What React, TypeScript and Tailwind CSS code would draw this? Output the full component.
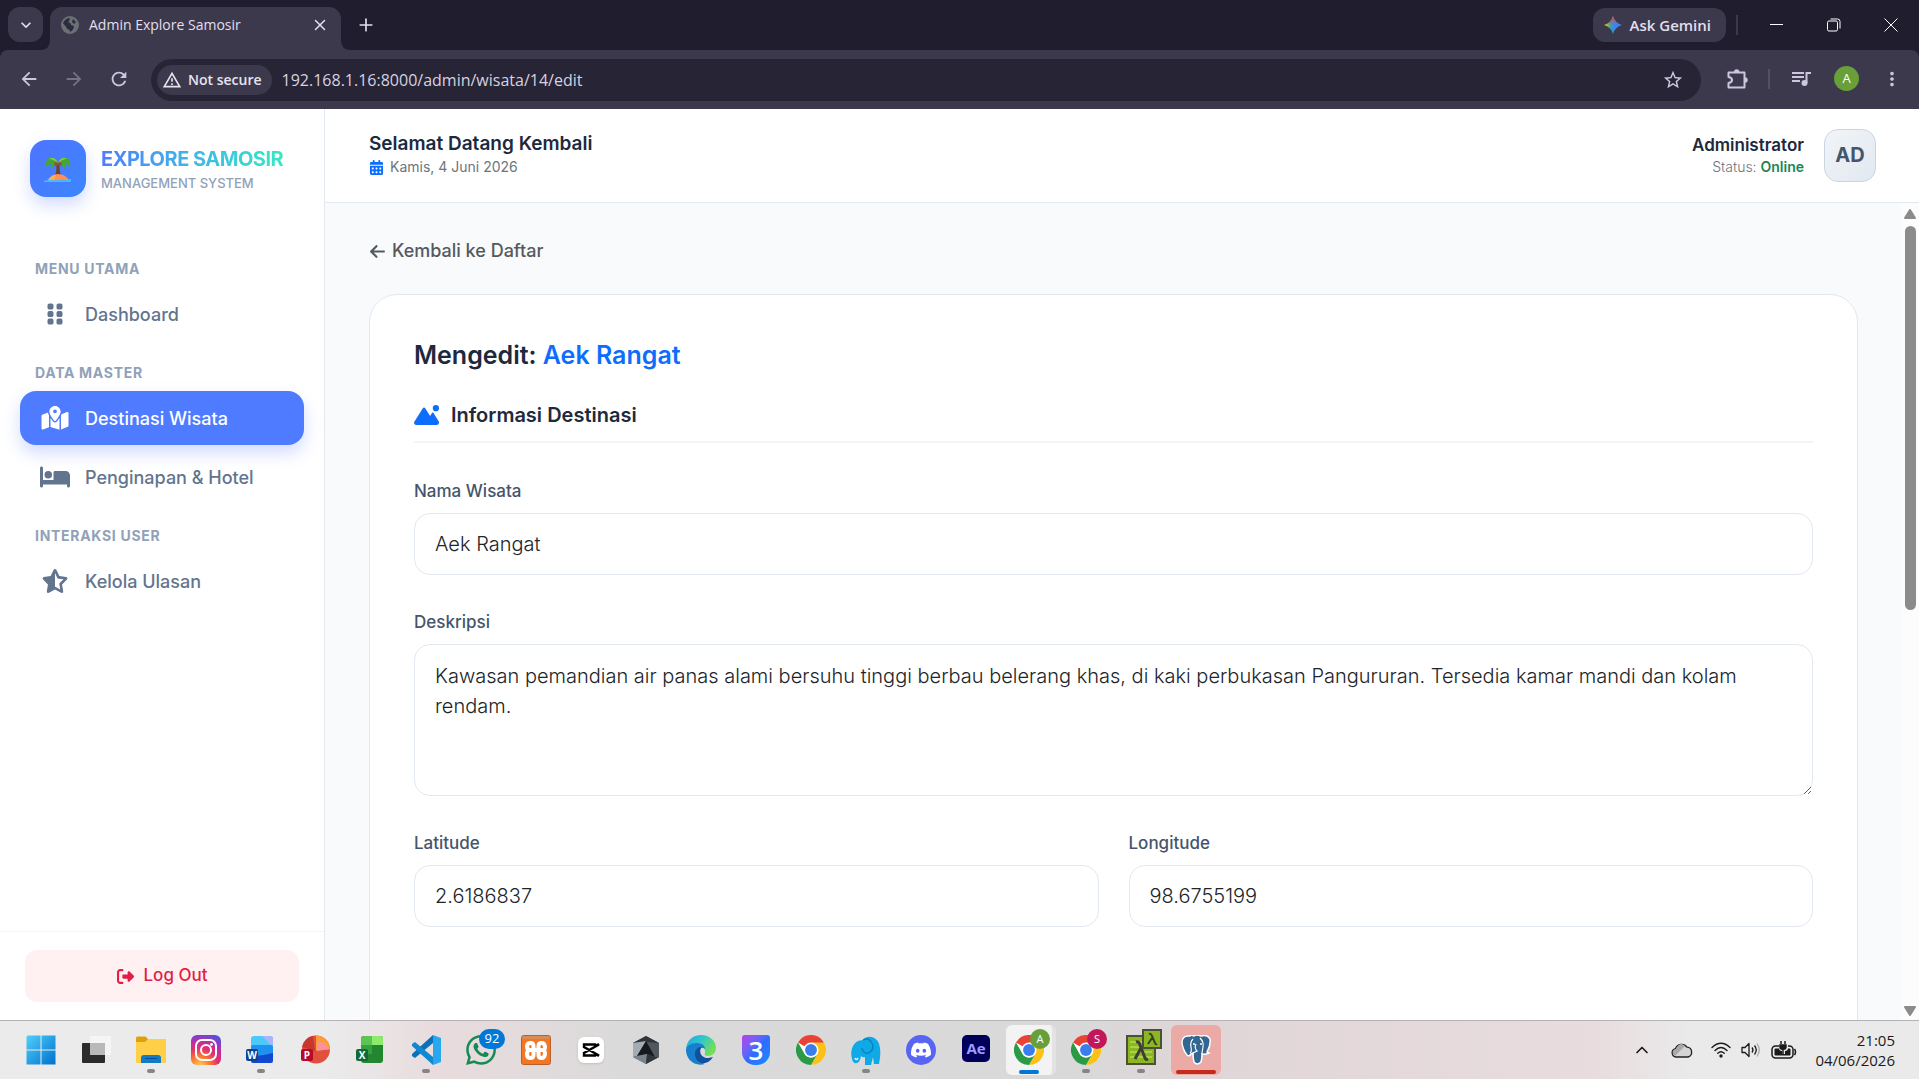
import React from 'react';
import { FaGripVertical, FaMapLocationDot, FaBed, FaStarHalfStroke, FaRightFromBracket, FaCalendarDays, FaArrowLeft, FaMountainSun } from 'react-icons/fa6';
import { MdArrowBack, MdArrowForward, MdRefresh, MdStarBorder, MdMoreVert, MdExpandMore, MdOutlineWarningAmber } from 'react-icons/md';
import { LuX, LuPlus, LuChevronUp } from 'react-icons/lu';
import { SiDiscord, SiWhatsapp } from 'react-icons/si';

function TabStrip() {
  return (
    <div className="flex h-[50px] shrink-0 items-end bg-[#201d2e] text-[#e2dfee]">
      <button aria-label="Search tabs" className="mb-2 ml-2 flex h-[35px] w-[35px] items-center justify-center rounded-xl bg-[#3d394c]">
        <MdExpandMore className="text-xl" />
      </button>
      <div className="relative ml-[7px] flex h-[43px] w-[291px] items-center rounded-t-xl bg-[#3d394c] pr-3 pb-2 pl-[11px]">
        <svg viewBox="0 0 10 10" className="absolute bottom-0 -left-[10px] h-[10px] w-[10px]"><path d="M10 0v10H0Q10 10 10 0z" fill="#3d394c" /></svg>
        <svg viewBox="0 0 10 10" className="absolute -right-[10px] bottom-0 h-[10px] w-[10px]"><path d="M0 0v10h10Q0 10 0 0z" fill="#3d394c" /></svg>
        <svg viewBox="0 0 18 18" className="h-[18px] w-[18px] shrink-0">
          <circle cx="9" cy="9" r="9" fill="#6b7075" />
          <path d="M2 7c2-4 5-5 7-5-1 2 0 3-2 4 2 1 3 1 3 3l3 1c0 3-2 5-4 6 0-2-1-3-3-3 0-2-2-3-4-6zM12 3l3 3-2 2-2-2z" fill="#2e2b3c" />
        </svg>
        <span className="ml-[10px] flex-1 text-[14px] whitespace-nowrap">Admin Explore Samosir</span>
        <button aria-label="Close tab"><LuX className="text-lg" /></button>
      </div>
      <button aria-label="New tab" className="mb-[15px] ml-[15px]"><LuPlus className="text-xl" /></button>
      <div className="flex-1" />
      <button className="mb-2 flex h-[34px] items-center gap-2 rounded-xl bg-[#3d394c] pr-[15px] pl-[11px] text-[15px] font-semibold">
        <svg viewBox="0 0 18 18" className="h-[18px] w-[18px]">
          <defs>
            <linearGradient id="gem" x1="0" y1="0" x2="1" y2="0">
              <stop offset="0.1" stopColor="#fbbc04" /><stop offset="0.35" stopColor="#34a3a8" /><stop offset="0.6" stopColor="#3b82f6" />
            </linearGradient>
            <linearGradient id="gemTop" x1="0" y1="0" x2="0" y2="1">
              <stop offset="0" stopColor="#ea4335" /><stop offset="0.5" stopColor="#ea4335" stopOpacity="0" />
            </linearGradient>
          </defs>
          <path d="M9 0q2 7 9 9-7 2-9 9-2-7-9-9 7-2 9-9z" fill="url(#gem)" />
          <path d="M9 0q2 7 9 9-7 2-9 9-2-7-9-9 7-2 9-9z" fill="url(#gemTop)" />
        </svg>
        Ask Gemini
      </button>
      <div className="mb-[15px] ml-[10px] h-5 w-[2px] bg-[#3d394c]" />
      <div className="mb-[18px] ml-[32px] flex items-center gap-[43px] pr-[21px]">
        <button aria-label="Minimize"><svg viewBox="0 0 14 14" className="h-[14px] w-[14px]"><path d="M0 6.500h13" stroke="#fff" /></svg></button>
        <button aria-label="Restore"><svg viewBox="0 0 14 14" className="h-[14px] w-[14px]"><rect x="0.500" y="3" width="10" height="10" rx="1.500" stroke="#fff" fill="none" /><path d="M3.500 1h7q2.500 0 2.500 2.500v7" stroke="#fff" fill="none" /></svg></button>
        <button aria-label="Close"><svg viewBox="0 0 14 14" className="h-[14px] w-[14px]"><path d="M0.500 0.500l13 13M13.500 0.500l-13 13" stroke="#fff" /></svg></button>
      </div>
    </div>
  );
}

function Toolbar() {
  return (
    <div className="shrink-0 bg-[#201d2e]">
      <div className="flex h-[59px] items-center rounded-t-lg bg-[#3d394c] text-[#cdc6dd]">
        <div className="flex w-[151px] items-center gap-[23px] pb-[2px] pl-[18px] text-[22px]">
          <button aria-label="Back"><MdArrowBack /></button>
          <button aria-label="Forward" className="text-[#767185]"><MdArrowForward /></button>
          <button aria-label="Reload"><MdRefresh /></button>
        </div>
        <div className="flex h-[42px] flex-1 items-center rounded-full bg-[#272436] pr-[17px] pl-[6px]">
          <button className="flex h-[30px] items-center gap-[6px] rounded-full bg-[#3d394c] pr-[10px] pl-[5px] text-[14px] font-semibold whitespace-nowrap text-[#e6e3ee]">
            <MdOutlineWarningAmber className="text-xl" />Not secure
          </button>
          <input aria-label="Address" className="ml-[10px] flex-1 bg-transparent text-[16px] text-[#d6d2e0] outline-none" defaultValue="192.168.1.16:8000/admin/wisata/14/edit" />
          <button aria-label="Bookmark"><MdStarBorder className="text-[22px]" /></button>
        </div>
        <div className="flex items-center pr-4 pb-[2px] pl-[25px] text-[22px]">
          <button aria-label="Extensions"><svg viewBox="0 0 22 22" className="h-[22px] w-[22px]"><path d="M2.500 4.500h16v15h-16V15q3.500-.5 3.500-3t-3.500-3z" fill="none" stroke="currentColor" strokeWidth="2" strokeLinejoin="round" /><path d="M8 4a2.700 2.700 0 0 1 5.400 0zM19 9.300a2.700 2.700 0 0 1 0 5.400z" fill="currentColor" /></svg></button>
          <div className="mx-[20px] h-5 w-[2px] bg-[#555064]" />
          <button aria-label="Media"><svg viewBox="0 0 22 22" className="h-[22px] w-[22px]"><path d="M2 5h12M2 9h12M2 13h8" stroke="currentColor" strokeWidth="2" /><circle cx="14.500" cy="15" r="3" fill="currentColor" /><path d="M16.500 15V5H21" stroke="currentColor" strokeWidth="2" fill="none" /></svg></button>
          <button className="ml-[22px] flex h-[25px] w-[25px] items-center justify-center rounded-full bg-[#689f38] text-[13px] text-white">A</button>
          <button aria-label="Menu" className="ml-[22px]"><MdMoreVert /></button>
        </div>
      </div>
    </div>
  );
}

function Palm() {
  return (
    <svg viewBox="0 0 28 28" className="h-7 w-7">
      <path d="M12 9h4c-1 5 0 8 1 12h-6c1-4 2-7 1-12z" fill="#6d4335" />
      <path d="M14 8C11 1 5 1 3 5c-2 2-2 5 0 7 1-2 2-3 4-3-1 2 0 4 1 5 1-3 3-5 6-6 3 1 5 3 6 6 1-1 2-3 1-5 2 0 3 1 4 3 2-2 2-5 0-7-2-4-8-4-11 3z" fill="#45a636" />
      <path d="M14 8C12 3 8 2 5 4c4 0 6 2 9 4 3-2 5-4 9-4-3-2-7-1-9 4z" fill="#86cf45" />
      <circle cx="12" cy="9" r="2" fill="#8e5443" /><circle cx="16" cy="9" r="2" fill="#8e5443" />
      <path d="M4 25q3-6 10-6t11 6z" fill="#ff8f55" />
      <path d="M4 25q4-5 8-5l-2 5z" fill="#ffb04c" />
      <path d="M0 26q6-2 14-1t13-1q1 2-1 3H0z" fill="#4fb9f7" />
    </svg>
  );
}

const groups = [
  { title: 'MENU UTAMA', items: [{ label: 'Dashboard', Icon: FaGripVertical }] },
  { title: 'DATA MASTER', items: [{ label: 'Destinasi Wisata', Icon: FaMapLocationDot, active: true }, { label: 'Penginapan & Hotel', Icon: FaBed }] },
  { title: 'INTERAKSI USER', items: [{ label: 'Kelola Ulasan', Icon: FaStarHalfStroke }] },
] as { title: string; items: { label: string; Icon: React.ComponentType<{ className?: string }>; active?: boolean }[] }[];

function Sidebar() {
  return (
    <aside className="flex w-[325px] shrink-0 flex-col border-r border-slate-200 bg-white">
      <div className="flex items-center gap-[15px] px-[30px] pt-[31px]">
        <div className="flex h-[57px] w-14 shrink-0 items-center justify-center rounded-2xl bg-linear-to-br from-[#4e73ff] to-[#3a86ff] shadow-[0_8px_16px_rgba(78,115,255,0.25)]"><Palm /></div>
        <div className="pt-1 whitespace-nowrap">
          <div className="bg-linear-to-r from-[#4e7bff] to-[#37e8c4] bg-clip-text text-[20px] leading-6 font-bold tracking-tight text-transparent">EXPLORE SAMOSIR</div>
          <div className="text-[13px] leading-6 font-medium text-slate-400">MANAGEMENT SYSTEM</div>
        </div>
      </div>
      <nav className="mt-[52px] flex flex-1 flex-col px-5">
        {groups.map((g) => (
          <section key={g.title} className="mb-[7px]">
            <h2 className="mt-2 mb-[6px] pl-[15px] text-[14px] leading-6 font-bold tracking-wider text-slate-400">{g.title}</h2>
            {g.items.map(({ label, Icon, active }) => (
              <a key={label} href="#" className={active ? 'mb-[5px] flex h-[54px] items-center gap-[15px] rounded-2xl bg-[#4e7bff] pl-5 text-[18px] font-medium text-white shadow-[0_8px_16px_rgba(78,115,255,0.25)]' : 'mb-[5px] flex h-[54px] items-center gap-[15px] rounded-2xl pl-5 text-[18px] font-medium text-slate-500'}>
                <Icon className="h-6 w-[30px]" />
                {label}
              </a>
            ))}
          </section>
        ))}
      </nav>
      <div className="border-t border-slate-100 px-[25px] pt-[18px] pb-[18px]">
        <button className="flex h-[52px] w-full items-center justify-center gap-[10px] rounded-xl bg-[#fff0f1] text-[17px] font-medium text-[#e11d48]">
          <FaRightFromBracket />Log Out
        </button>
      </div>
    </aside>
  );
}

function Header() {
  return (
    <header className="flex h-[94px] shrink-0 items-center justify-between border-b border-slate-200 bg-white pr-[43px] pb-[1px] pl-11">
      <div>
        <div className="text-[19px] leading-6 font-semibold text-slate-800">Selamat Datang Kembali</div>
        <div className="flex items-center gap-[6px] text-[14px] leading-[22px] text-[#6c757d]"><FaCalendarDays className="text-[15px] text-[#0d6efd]" />Kamis, 4 Juni 2026</div>
      </div>
      <div className="flex items-center gap-5">
        <div className="text-right">
          <div className="text-[17px] leading-6 font-semibold text-slate-800">Administrator</div>
          <div className="text-[14px] leading-5 font-light text-[#6c757d]">Status: <span className="font-semibold text-[#198754]">Online</span></div>
        </div>
        <div className="flex h-[53px] w-[52px] items-center justify-center rounded-[14px] border border-slate-300 bg-linear-to-br from-slate-100 to-slate-200 text-xl font-bold text-slate-600">AD</div>
      </div>
    </header>
  );
}

const labelClass = 'mb-[10px] block text-[17px] leading-6 font-medium text-slate-600';
const fieldClass = 'block w-full rounded-2xl border border-slate-200 bg-white px-5 text-[20px] leading-[30px] font-light text-[#212529] outline-none';

function Field({ id, label, value }: { id: string; label: string; value: string }) {
  return (
    <div>
      <label htmlFor={id} className={labelClass}>{label}</label>
      <input id={id} defaultValue={value} className={fieldClass + ' h-[62px]'} />
    </div>
  );
}

function Content() {
  return (
    <div className="flex min-h-0 flex-1">
      <main className="min-w-0 flex-1 overflow-hidden bg-slate-50 pt-9 pr-[43px] pl-11">
        <a href="#" className="flex items-center gap-[6px] text-[18px] leading-6 font-medium text-[#55595e]"><FaArrowLeft className="text-[17px]" />Kembali ke Daftar</a>
        <form className="mt-[31px] h-[900px] rounded-[28px] border border-slate-200 bg-white p-11">
          <h1 className="text-[25px] leading-8 font-semibold text-slate-800">Mengedit: <span className="text-[#0d6efd]">Aek Rangat</span></h1>
          <h2 className="mt-[30px] mb-9 flex items-center gap-3 border-b-2 border-slate-100 pb-3 text-xl leading-7 font-semibold text-slate-800">
            <FaMountainSun className="h-5 w-[25px] text-[#0d6efd]" />Informasi Destinasi
          </h2>
          <Field id="nama" label="Nama Wisata" value="Aek Rangat" />
          <div className="mt-[35px]">
            <label htmlFor="desk" className={labelClass}>Deskripsi</label>
            <textarea id="desk" className={fieldClass + ' h-[152px] resize-y py-4'} defaultValue="Kawasan pemandian air panas alami bersuhu tinggi berbau belerang khas, di kaki perbukasan Pangururan. Tersedia kamar mandi dan kolam rendam." />
          </div>
          <div className="mt-[35px] grid grid-cols-2 gap-[30px]">
            <Field id="lat" label="Latitude" value="2.6186837" />
            <Field id="lng" label="Longitude" value="98.6755199" />
          </div>
        </form>
      </main>
      <div aria-hidden="true" className="flex w-[18px] shrink-0 flex-col items-center bg-[#fcfcfc] pt-[6px] pb-1">
        <svg viewBox="0 0 12 10" className="h-[10px] w-3"><path d="M6 1l5 8H1z" fill="#8b8b8b" stroke="#8b8b8b" strokeLinejoin="round" strokeWidth="2" /></svg>
        <div className="mt-[7px] h-[384px] w-[11px] rounded-full bg-[#8b8b8b]" />
        <div className="flex-1" />
        <svg viewBox="0 0 12 10" className="h-[10px] w-3"><path d="M6 9l5-8H1z" fill="#8b8b8b" stroke="#8b8b8b" strokeLinejoin="round" strokeWidth="2" /></svg>
      </div>
    </div>
  );
}

const svg = 'h-[30px] w-[30px]';

function Chrome() {
  return (
    <svg viewBox="0 0 48 48" className={svg}>
      <circle cx="24" cy="24" r="24" fill="#fff" />
      <path d="M24 24L3.200 12A24 24 0 0 1 44.800 12z" fill="#ea4335" />
      <path d="M24 12h20.800A24 24 0 0 1 24 48l10.400-18z" fill="#fbc116" />
      <path d="M3.200 12A24 24 0 0 0 24 48l10.400-18A12 12 0 0 1 13.600 30z" fill="#2b9a47" />
      <circle cx="24" cy="24" r="12" fill="#fff" /><circle cx="24" cy="24" r="9.500" fill="#3b7ded" />
    </svg>
  );
}

function OfficeTile({ letter, color }: { letter: string; color: string }) {
  return <span className="absolute bottom-[4px] left-0 flex h-3 w-3 items-center justify-center rounded-[2px] text-[10px] leading-none font-bold text-white" style={{ backgroundColor: color }}>{letter}</span>;
}

type TaskbarApp = { name: string; icon: React.ReactNode; mark?: string };

const apps: TaskbarApp[] = [
  { name: 'Start', icon: <svg viewBox="0 0 30 30" className={svg}><defs><linearGradient id="win" x1="0" y1="0" x2="1" y2="1"><stop stopColor="#4fd0fb" /><stop offset="1" stopColor="#0070cc" /></linearGradient></defs><path d="M1.500 0.500h13v14h-14v-13zM15.500 0.500h14v14h-14zM0.500 15.500h14v14h-14zM15.500 15.500h14v14h-14z" fill="url(#win)" /></svg> },
  { name: 'Task view', icon: <svg viewBox="0 0 30 30" className={svg}><rect x="1" y="8" width="23" height="20" rx="1" fill="#2b2b2b" /><rect x="9" y="1" width="21" height="19" rx="1" fill="#f5f5f5" /><path d="M9 8h15v12H9z" fill="#b9b9b9" /></svg> },
  { name: 'File Explorer', mark: 'gray', icon: <svg viewBox="0 0 30 30" className={svg}><path d="M0 3q0-1.500 1.500-1.500h8l3 3H30V12H0z" fill="#dfa008" /><path d="M0 7h9l3-3h17q1 0 1 1v22q0 1-1 1H1q-1 0-1-1z" fill="#ffcf48" /><path d="M5 28v-5q0-3 3-3h14q3 0 3 3v5z" fill="#127bc9" /><path d="M9 23.500h12" stroke="#0a4d8f" /></svg> },
  { name: 'Instagram', icon: <svg viewBox="0 0 30 30" className={svg}><defs><radialGradient id="ig" cx="0.3" cy="1.05" r="1.1"><stop stopColor="#ffd35c" /><stop offset="0.3" stopColor="#fb7b2f" /><stop offset="0.55" stopColor="#e52f6b" /><stop offset="0.8" stopColor="#b32fb0" /><stop offset="1" stopColor="#5a4fd8" /></radialGradient></defs><rect width="30" height="30" rx="6" fill="url(#ig)" /><rect x="5" y="5" width="20" height="20" rx="6" fill="none" stroke="#fff" strokeWidth="2" /><circle cx="15" cy="15" r="5" fill="none" stroke="#fff" strokeWidth="2" /><circle cx="20.500" cy="9.500" r="1.400" fill="#fff" /></svg> },
  { name: 'Word', mark: 'gray', icon: <><svg viewBox="0 0 30 30" className={svg}><rect x="5" y="1" width="22" height="14" rx="3" fill="#4cc8fb" /><path d="M16 1h8q3 0 3 3v8z" fill="#a9b5f8" /><rect x="5" y="10" width="22" height="11" rx="2" fill="#1d92f0" /><path d="M5 21q12 0 22-3v8q0 2-2 2H7q-2 0-2-2z" fill="#1048d0" /></svg><OfficeTile letter="W" color="#103f91" /></> },
  { name: 'PowerPoint', icon: <><svg viewBox="0 0 30 30" className={svg}><circle cx="15" cy="14.500" r="14" fill="#e2503d" /><path d="M15 .5a14 14 0 0 1 14 14l-14 1z" fill="#ff9b38" /><path d="M16 6q9 2 12 8l-12 2z" fill="#f9939b" /><path d="M12 1q-8 1-11 11l13 4z" fill="#c8372e" /></svg><OfficeTile letter="P" color="#b30b2b" /></> },
  { name: 'Excel', icon: <><svg viewBox="0 0 30 30" className={svg}><rect x="5" y="1" width="22" height="27" rx="3" fill="#23872f" /><path d="M16 1h8q3 0 3 3v6H16z" fill="#8deb6b" /><path d="M8 1h8v9H5V4q0-3 3-3z" fill="#5cc453" /><path d="M5 10h11v9H5z" fill="#35a142" /></svg><OfficeTile letter="X" color="#0e6b39" /></> },
  { name: 'Visual Studio Code', mark: 'gray', icon: <svg viewBox="0 0 30 30" className={svg}><path d="M22 0v8L4 23l-3-2v-2z" fill="#0a72b8" /><path d="M22 30v-8L4 7L1 9v2z" fill="#1089d3" /><path d="M22 0l8 3v24l-8 3z" fill="#27a7ee" /></svg> },
  { name: 'WhatsApp', icon: <><SiWhatsapp className="h-[30px] w-[30px] text-[#168a55]" /><span className="absolute -top-[6px] left-[13px] flex h-5 w-[26px] items-center justify-center rounded-full bg-[#0078d7] text-[13px] text-white">92</span></> },
  { name: 'XAMPP', icon: <svg viewBox="0 0 30 30" className={svg}><rect x="0.500" y="0.500" width="29" height="29" rx="2" fill="#f37623" stroke="#b8622a" /><path d="M1 1h28v3H1z" fill="#d98b55" /><g fill="none" stroke="#fff" strokeWidth="4" strokeLinecap="round" strokeLinejoin="round"><path d="M12 15H9.500q-3.500 0-3.500-3.500T9.500 8q3 0 3 3v1.500q0 2.500 2.500 2.500t2.500-2.500V11q0-3 3-3t3.500 3.500-3.500 3.500H18" /><path d="M12 15H9.500Q6 15 6 19t3.500 4q3 0 3-3v-2.500q0-2.500 2.500-2.500t2.500 2.500V20q0 3 3 3t3.500-4-3.500-4" /></g></svg> },
  { name: 'CapCut', icon: <span className="flex h-[26px] w-[26px] items-center justify-center rounded-md bg-white shadow"><svg viewBox="0 0 18 16" className="h-4 w-[18px]" fill="none" stroke="#000" strokeWidth="2.400"><path d="M17 2L13 4.500V2.500H2V5l15 8.500M17 14l-4-2.500v2H2V11l15-8.500" /></svg></span> },
  { name: 'Cursor', icon: <svg viewBox="0 0 30 30" className={svg}><path d="M15 1l13 7v14l-13 7-13-7V8z" fill="#50575f" /><path d="M15 1l13 7-13-1L2 8z" fill="#30353b" /><path d="M2 8l13-2L6 21l-4 1z" fill="#a3abb4" /><path d="M15 6l9 16-8-3-10 2z" fill="#16191d" /><path d="M6 21l10-2-1 10-13-7z" fill="#7b848d" /><path d="M16 19l8 3 4 0-13 7z" fill="#30353b" /></svg> },
  { name: 'Edge', icon: <svg viewBox="0 0 30 30" className={svg}><defs><linearGradient id="edge" x1="0" x2="1" y2="0.5"><stop stopColor="#20a7df" /><stop offset="0.5" stopColor="#31c4cf" /><stop offset="1" stopColor="#74df52" /></linearGradient></defs><path d="M0 14C1 5 7 0 15 0c9 0 15 6 15 13 0 5-4 8-8 8-3 0-4-1-3-3 1-5-3-8-7-8C6 10 1 12 0 14z" fill="url(#edge)" /><path d="M0 15c0-4 5-7 10-7 5 0 9 2 9 6-4-3-8 0-8 5 0 6 5 9 8 10C8 32 0 24 0 15z" fill="#177fce" /><path d="M9 19c0-4 2-7 7-7-4 4-1 11 6 11 2 0 4-1 5-1-6 10-18 7-18-3z" fill="#11509b" /></svg> },
  { name: '3uTools', icon: <span className="flex h-[30px] w-7 items-center justify-center rounded-t-[3px] rounded-b-[13px] bg-linear-to-br from-[#b53be8] via-[#2f6bff] to-[#128dff] text-[26px] leading-none font-semibold text-white">3</span> },
  { name: 'Chrome', icon: <Chrome /> },
  { name: 'Elephant', mark: 'gray', icon: <svg viewBox="0 0 30 30" className={svg}><path d="M12 5q3-4 9-3 7 2 8 11 1 7-1 16h-5l-1-7-2 8h-6v-8q-2 1-4-1-1 6-4 7-4 1-5-4-2-8 1-13 3-6 10-6z" fill="#10a9e8" /><path d="M12 5q6-3 9 3t-3 10q-6 1-7-5" stroke="#0785bd" strokeWidth="1.500" fill="none" /><path d="M4 23q1 3 3 0" stroke="#e9f7fd" strokeWidth="1.500" fill="none" /></svg> },
  { name: 'Discord', icon: <span className="flex h-[30px] w-[30px] items-center justify-center rounded-full bg-[#5865f2] text-xl text-white"><SiDiscord /></span> },
  { name: 'After Effects', icon: <span className="mb-1 flex h-[27px] w-7 items-center justify-center rounded-[5px] bg-[#00005b] text-[15px] font-bold text-[#a29bff]">Ae</span> },
  { name: 'Chrome profile A', mark: 'blue', icon: <><Chrome /><span className="absolute -top-[6px] left-4 flex h-5 w-5 items-center justify-center rounded-full bg-[#689f38] text-[11px] text-white">A</span></> },
  { name: 'Chrome profile S', mark: 'gray', icon: <><Chrome /><span className="absolute -top-[6px] left-4 flex h-5 w-5 items-center justify-center rounded-full bg-[#c2185b] text-[11px] text-white">S</span></> },
  { name: 'Console', mark: 'gray', icon: <><svg viewBox="0 0 30 30" className={svg}><rect x="1" y="1" width="28" height="28" fill="#8cb81f" stroke="#4c4f3a" strokeWidth="2" /><path d="M4 7h22M4 12h22M4 17h22M4 22h22" stroke="#b4d75c" strokeWidth="1.500" /><path d="M10 7q3-1 4 3l5 13q1 2 3 1M15 13L9 24" stroke="#3d3d35" strokeWidth="3" fill="none" /></svg><svg viewBox="0 0 20 20" className="absolute -top-[6px] left-4 h-5 w-5"><rect x="1" y="1" width="18" height="18" fill="#8cb81f" stroke="#4c4f3a" strokeWidth="2" /><path d="M7 5q2-1 3 2l3 7q1 2 2 1M10 9l-4 6" stroke="#3d3d35" strokeWidth="2" fill="none" /></svg></> },
  { name: 'PostgreSQL', mark: 'red', icon: <svg viewBox="0 0 30 30" className={svg}><path d="M9 1Q1 0 1 8q1 7 5 12 2 2 4-1l2-1q0 6 1 9 3 4 7 0 1-3 1-8 3 1 7-1l-2-1q4-7 3-13-3-5-9-3-5-2-7 0-2-1-4-1z" fill="#336791" stroke="#fff" strokeWidth="1.500" /><path d="M12 4q-3 3-2 8t-1 6M19 3q4 4 3 9t-1 7M12 18l4-2q-3-3-1-7" fill="none" stroke="#fff" strokeWidth="1.200" /><circle cx="13" cy="9" r="1" fill="#fff" /><circle cx="20" cy="9" r="1" fill="#fff" /></svg> },
];

function markClass(mark?: string) {
  if (mark === 'gray') return 'absolute bottom-[2px] h-1 w-2 rounded-full bg-[#858585]';
  if (mark === 'blue') return 'absolute bottom-[1px] h-1 w-5 rounded-full bg-[#0078d7]';
  return 'absolute bottom-[1px] h-1 w-10 rounded-full bg-[#c42b1c]';
}

function tileClass(mark?: string) {
  if (mark === 'blue') return 'relative flex h-[50px] w-[50px] items-center justify-center rounded-md border-r-4 border-[#e3e3e3] bg-[#f3f3f3]';
  if (mark === 'red') return 'relative flex h-[50px] w-[50px] items-center justify-center rounded-md bg-[#ebaaa6]';
  return 'relative flex h-[50px] w-[50px] items-center justify-center';
}

function Taskbar() {
  return (
    <footer className="flex h-[59px] shrink-0 items-center justify-between border-t border-[#b4b2b3] bg-[linear-gradient(90deg,#ebebeb_17%,#e8dbdd_23%,#dadada_33%,#d9d9d9_56%,#e0d5d7_63%,#e8dcde_83%,#eaeaea_88%)] pr-6 pl-4 text-[#1b1b1b]">
      <div className="flex gap-[5px]">
        {apps.map((a) => (
          <button key={a.name} aria-label={a.name} className={tileClass(a.mark)}>
            <span className="relative flex h-[30px] w-[30px] items-center justify-center">{a.icon}</span>
            {a.mark && <span className={markClass(a.mark)} />}
          </button>
        ))}
      </div>
      <div className="flex items-center">
        <button aria-label="Hidden icons"><LuChevronUp className="text-xl" /></button>
        <svg viewBox="0 0 22 16" className="ml-[19px] h-4 w-[22px]"><path d="M5 15a4.200 4.200 0 0 1-.5-8.300A6.500 6.500 0 0 1 16 5.200 5 5 0 0 1 17 15z" fill="#d5d5d5" stroke="#222" strokeWidth="1.300" /><path d="M4 14L14 4q-5-5-9 3-4 1-3 5z" fill="#a8a8a8" /></svg>
        <svg viewBox="0 0 20 16" className="ml-[18px] h-4 w-5" fill="none" stroke="#1b1b1b" strokeWidth="1.400" strokeLinecap="round"><path d="M1 5.500q9-8.500 18 0M4 8.500q6-6 12 0M6.800 11.300q3.200-3.200 6.400 0" /><circle cx="10" cy="14" r="1" fill="#1b1b1b" /></svg>
        <svg viewBox="0 0 20 16" className="ml-[10px] h-4 w-5" fill="none" stroke="#1b1b1b" strokeWidth="1.300" strokeLinejoin="round"><path d="M1 5.500h3l4-4v13l-4-4H1zM11 5.500q2 2.500 0 5M13.500 3.500q3.500 4.500 0 9" /><path d="M16 1.500q4.500 6.500 0 13" stroke="#aaa" /></svg>
        <svg viewBox="0 0 26 18" className="ml-[10px] h-[18px] w-[26px]"><rect x="1" y="5" width="21" height="12" rx="3.500" fill="none" stroke="#1b1b1b" strokeWidth="1.500" /><path d="M23.500 8q2 3 0 6" stroke="#1b1b1b" strokeWidth="1.500" fill="none" /><rect x="3.500" y="7.500" width="16" height="7" rx="1" fill="#1b1b1b" /><path d="M8 2h9v5q0 3-3 3v3h-3v-3q-3 0-3-3z" fill="#eaeaea" /><path d="M10 0v3M14 0v3M9 4h6v2q0 2-3 2.500-3-.5-3-2.500zM12 8v6" stroke="#1b1b1b" strokeWidth="1.500" fill="#1b1b1b" /></svg>
        <time className="ml-[18px] text-right text-[15px] leading-5">21:05<br />04/06/2026</time>
      </div>
    </footer>
  );
}

export default function App() {
  return (
    <div className="flex h-screen flex-col overflow-hidden font-['Open_Sans','Noto_Sans',sans-serif]">
      <TabStrip />
      <Toolbar />
      <div className="flex min-h-0 flex-1 font-['Inter',sans-serif]">
        <Sidebar />
        <div className="flex min-w-0 flex-1 flex-col">
          <Header />
          <Content />
        </div>
      </div>
      <Taskbar />
    </div>
  );
}
